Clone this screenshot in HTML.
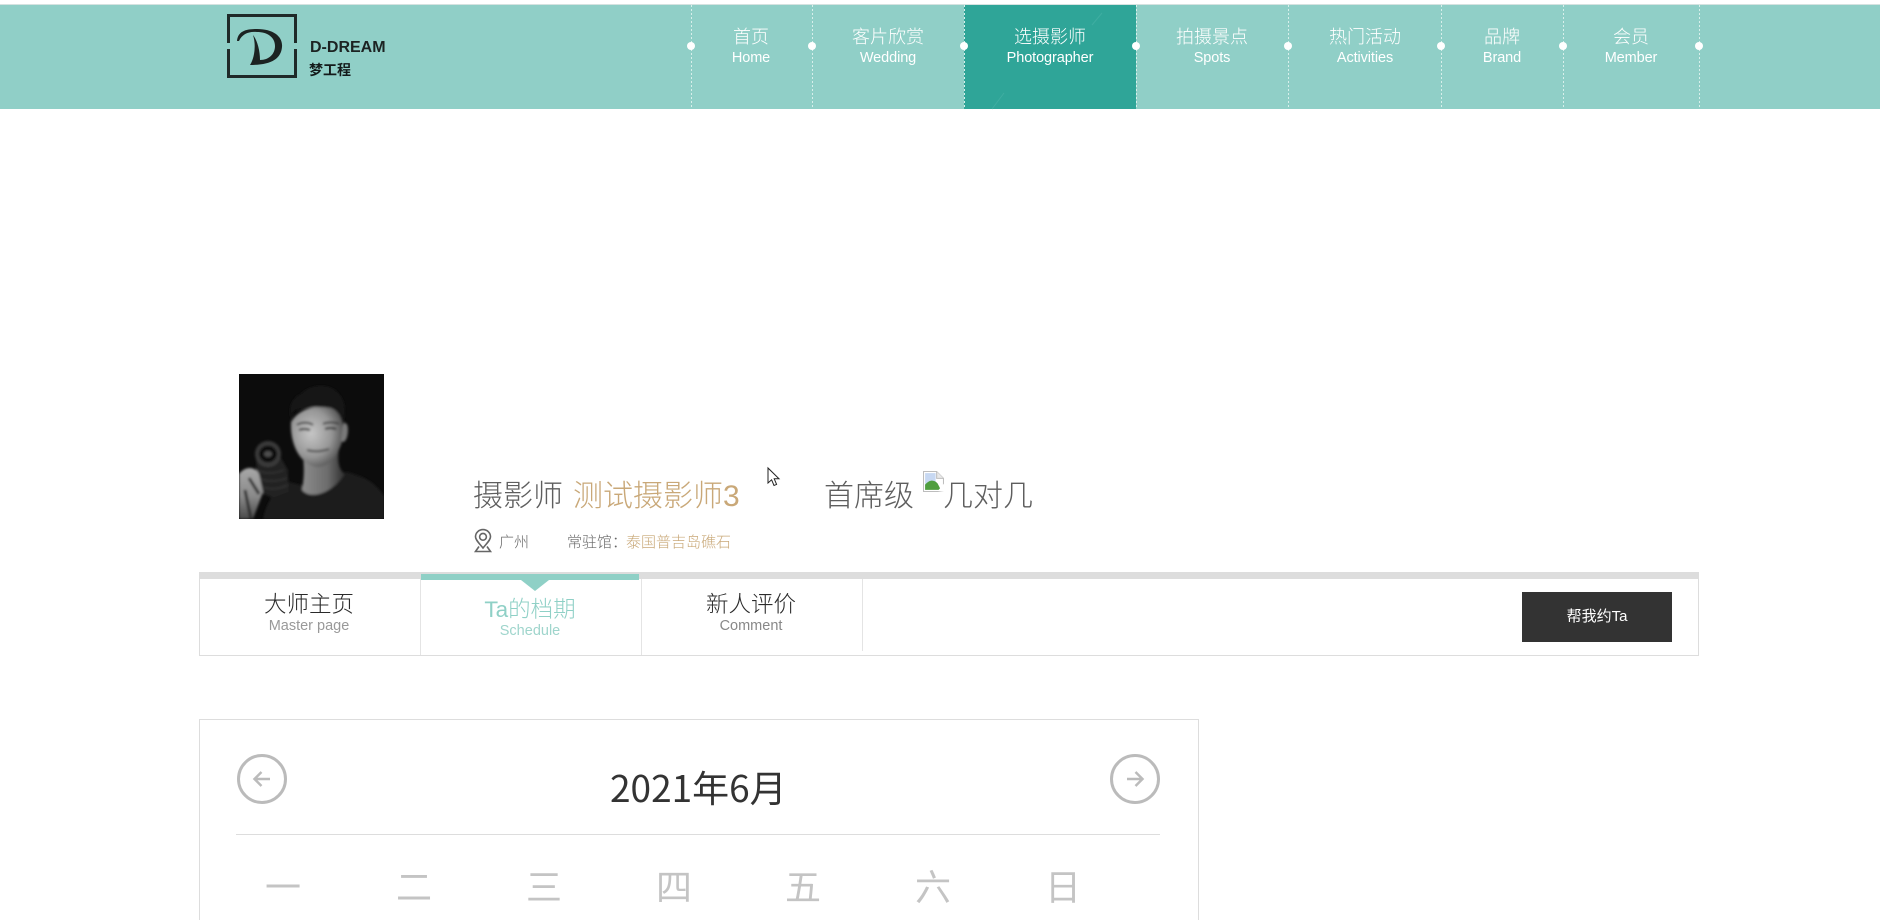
<!DOCTYPE html>
<html lang="zh"><head><meta charset="utf-8"><title>摄影师</title>
<style>
html,body{margin:0;padding:0;background:#fff;width:1880px;height:920px;overflow:hidden}
body{position:relative;font-family:"Liberation Sans","Noto Sans CJK SC",sans-serif}
.a{position:absolute;white-space:nowrap}
.c{position:absolute;white-space:nowrap;transform:translateX(-50%);text-align:center}
.cn{font-family:"Noto Sans CJK SC",sans-serif}
.nav{position:absolute;left:0;top:5px;width:1880px;height:104px;background:#90cfc7}
.on{position:absolute;left:964px;top:5px;width:172px;height:104px;background:#2fa598}
.sep{position:absolute;top:5px;height:104px;width:1px;background:repeating-linear-gradient(to bottom,#d8efeb 0,#d8efeb 2px,transparent 2px,transparent 4px)}
.dot{position:absolute;top:42px;width:8px;height:8px;border-radius:50%;background:#fff;margin-left:-4px}
.n1{color:#fff;font-size:18px;line-height:24px;top:25px;font-weight:300}
.n2{color:#fff;font-size:14.5px;line-height:18px;top:49px;letter-spacing:-.1px}
svg{position:absolute;overflow:visible}
.wk{font-size:36px;line-height:50px;top:863px;color:#c4c4c4;font-weight:400}
.h{font-size:30px;line-height:42px;top:476px;font-weight:300;color:#5e5e5e}
</style></head><body>
<div class="a" style="left:0;top:4px;width:1880px;height:1px;background:#d5e2e0"></div>
<div class="nav"></div><div class="on"></div>
<svg style="left:964px;top:5px" width="172" height="104" viewBox="0 0 172 104"><path d="M128 20L138 8M28 104L40 88" stroke="#3fada1" stroke-width="1"/></svg>

<svg style="left:227px;top:14px" width="70" height="64" viewBox="0 0 70 64">
<path d="M1.500 29V1.500H68.500V29M68.500 35V62.500H1.500V35" fill="none" stroke="#1f2a29" stroke-width="3"/>
<path d="M10 27C11 17 19 15 30 15C47 15 56 23 55 33C54 45 44 51 23 51C28 43 29 30 26 21C30 26 33 36 33 46C42 46 48 40 48 32C48 23 40 18 30 18C22 17 15 20 12 27Z" fill="#1c2322"/>
</svg>
<div class="a" style="left:310px;top:38px;font-size:16px;line-height:20px;font-weight:bold;color:#1c2322">D-DREAM</div>
<div class="a cn" style="left:309px;top:60px;font-size:14px;line-height:20px;font-weight:bold;color:#141a1a">梦工程</div>

<div class="sep" style="left:691px"></div><div class="sep" style="left:812px"></div><div class="sep" style="left:964px"></div><div class="sep" style="left:1136px"></div><div class="sep" style="left:1288px"></div><div class="sep" style="left:1441px"></div><div class="sep" style="left:1563px"></div><div class="sep" style="left:1699px"></div>
<div class="dot" style="left:691px"></div><div class="dot" style="left:812px"></div><div class="dot" style="left:964px"></div><div class="dot" style="left:1136px"></div><div class="dot" style="left:1288px"></div><div class="dot" style="left:1441px"></div><div class="dot" style="left:1563px"></div><div class="dot" style="left:1699px"></div>

<div class="c n1" style="left:751px">首页</div><div class="c n2" style="left:751px">Home</div>
<div class="c n1" style="left:888px">客片欣赏</div><div class="c n2" style="left:888px">Wedding</div>
<div class="c n1" style="left:1050px">选摄影师</div><div class="c n2" style="left:1050px">Photographer</div>
<div class="c n1" style="left:1212px">拍摄景点</div><div class="c n2" style="left:1212px">Spots</div>
<div class="c n1" style="left:1365px">热门活动</div><div class="c n2" style="left:1365px">Activities</div>
<div class="c n1" style="left:1502px">品牌</div><div class="c n2" style="left:1502px">Brand</div>
<div class="c n1" style="left:1631px">会员</div><div class="c n2" style="left:1631px">Member</div>

<svg style="left:239px;top:374px;overflow:hidden" width="145" height="145" viewBox="0 0 145 145">
<defs><filter id="b1"><feGaussianBlur stdDeviation="1.200"/></filter>
<radialGradient id="f" cx="0.38" cy="0.45" r="0.7"><stop offset="0" stop-color="#c6c6c6"/><stop offset="0.55" stop-color="#969696"/><stop offset="1" stop-color="#3c3c3c"/></radialGradient>
<linearGradient id="nk" x1="0" x2="1"><stop offset="0" stop-color="#8c8c8c"/><stop offset="0.6" stop-color="#6c6c6c"/><stop offset="1" stop-color="#2c2c2c"/></linearGradient>
<linearGradient id="hd" x1="0" x2="0" y1="0" y2="1"><stop offset="0" stop-color="#a8a8a8"/><stop offset="0.55" stop-color="#8a8a8a"/><stop offset="1" stop-color="#4a4a4a"/></linearGradient></defs>
<rect width="145" height="145" fill="#0c0c0c"/>
<g filter="url(#b1)">
<path d="M50 108C28 118 24 145 24 145H145V122C135 106 122 102 108 98L66 112Z" fill="#1a1a1a"/>
<path d="M64 82C66 100 64 110 63 116C72 126 92 120 106 100C100 96 98 88 100 74Z" fill="url(#nk)"/>
<path d="M52 48C51 72 62 91 78 93C93 93 102 76 105 60L105 36C96 30 64 28 52 48Z" fill="url(#f)"/>
<path d="M104 50C109 46 110 56 108 63C106 70 102 68 102 66Z" fill="#7a7a7a"/>
<path d="M52 46C48 30 56 22 62 20C70 10 92 8 100 20C108 28 106 42 104 52C102 42 99 37 92 34C80 32 66 33 56 36C53 39 52 42 52 46Z" fill="#191919"/>
<path d="M58 51C62 48 70 48 74 51M84 50C88 48 96 48 100 50" stroke="#404040" stroke-width="2" fill="none"/>
<path d="M60 56Q65 54 71 56M86 55Q91 53 97 55" stroke="#262626" stroke-width="2" fill="none"/>
<path d="M68 76Q78 79 90 75" stroke="#4c4c4c" stroke-width="2" fill="none"/>
<path d="M17 84L18 104L20 118L34 124L50 118L49 96L42 84Z" fill="#202020"/>
<path d="M17 96Q30 102 45 96M18 104Q32 110 48 104M20 112Q34 118 49 111" stroke="#303030" stroke-width="2" fill="none"/>
<ellipse cx="29" cy="80" rx="13" ry="13" fill="#3a3a3a"/>
<ellipse cx="29" cy="80" rx="9" ry="8.500" fill="#111"/>
<ellipse cx="29" cy="80" rx="4" ry="3" fill="#4e4e4e"/>
<path d="M0 100C6 92 16 92 20 100L24 118L14 145H0Z" fill="url(#hd)"/>
<path d="M10 104L20 120M6 116L12 145" stroke="#2c2c2c" stroke-width="3"/>
</g></svg>

<div class="a h" style="left:473px">摄影师</div>
<div class="a h" style="left:573px;color:#c9a878">测试摄影师3</div>
<div class="a h" style="left:824px">首席级</div>
<svg style="left:923px;top:471px" width="21" height="21" viewBox="0 0 20 20">
<path d="M.5.5H13L19.500 7V19.500H.5Z" fill="#fff" stroke="#bdbdbd"/><path d="M13 .5V7H19.500" fill="#e8e8e8" stroke="#bdbdbd"/>
<rect x="2" y="2" width="10" height="12" fill="#c7d8f2"/><path d="M2 18V13C6 8 11 8 14 12L17 18Z" fill="#4f9e3f"/><path d="M14 19L20 12V20Z" fill="#fff"/></svg>
<div class="a h" style="left:943px">几对几</div>
<svg style="left:767px;top:467px" width="13" height="20" viewBox="0 0 13 20"><path d="M1 1V16L4.600 12.800L7 18.500L9.600 17.400L7.200 11.800H12Z" fill="#fff" stroke="#222" stroke-width="1"/></svg>

<svg style="left:474px;top:529px" width="18" height="24" viewBox="0 0 18 24" fill="none" stroke="#666" stroke-width="1.600">
<path d="M9 19C5 14 1.500 11 1.500 7.800A7.500 7.200 0 0 1 16.500 7.800C16.500 11 13 14 9 19Z"/><circle cx="9" cy="7.800" r="3.400"/><path d="M5 17.500L1.500 22.500H16.500L13 17.500"/></svg>
<div class="a" style="left:499px;top:532px;font-size:15px;line-height:22px;color:#666;font-weight:300">广州</div>
<div class="a" style="left:567px;top:532px;font-size:15px;line-height:22px;color:#666;font-weight:300">常驻馆：</div>
<div class="a" style="left:626px;top:532px;font-size:15px;line-height:22px;color:#c9a878;font-weight:300">泰国普吉岛礁石</div>

<div class="a" style="left:199px;top:572px;width:1500px;height:84px;box-sizing:border-box;border:1px solid #ddd;border-top:7px solid #ddd"></div>
<div class="a" style="left:420px;top:579px;width:1px;height:76px;background:#e4e4e4"></div>
<div class="a" style="left:641px;top:579px;width:1px;height:76px;background:#e4e4e4"></div>
<div class="a" style="left:862px;top:579px;width:1px;height:72px;background:#e4e4e4"></div>
<div class="a" style="left:421px;top:574px;width:218px;height:6px;background:#8fd0c6"></div>
<svg style="left:521px;top:580px" width="28" height="11" viewBox="0 0 28 11"><path d="M0 0H28L14 11Z" fill="#8fd0c6"/></svg>
<div class="c" style="left:309px;top:589px;font-size:22.500px;line-height:32px;color:#2a2a2a;font-weight:300">大师主页</div>
<div class="c" style="left:309px;top:616px;font-size:14.500px;line-height:20px;color:#999">Master page</div>
<div class="c" style="left:530px;top:594px;font-size:22.500px;line-height:32px;color:#8fd0c6;font-weight:300">Ta的档期</div>
<div class="c" style="left:530px;top:621px;font-size:14.500px;line-height:20px;color:#9fd5cc">Schedule</div>
<div class="c" style="left:751px;top:589px;font-size:22.500px;line-height:32px;color:#2a2a2a;font-weight:300">新人评价</div>
<div class="c" style="left:751px;top:616px;font-size:14.500px;line-height:20px;color:#888">Comment</div>
<div class="a" style="left:1522px;top:592px;width:150px;height:50px;background:#333;color:#fff;font-size:15px;line-height:50px;text-align:center">帮我约Ta</div>

<div class="a" style="left:199px;top:719px;width:1000px;height:240px;box-sizing:border-box;border:1px solid #ddd"></div>
<svg style="left:237px;top:754px" width="50" height="50" viewBox="0 0 50 50" fill="none" stroke="#bbb"><circle cx="25" cy="25" r="23.500" stroke-width="3"/><path d="M33 25H18M24.500 18L17.500 25L24.500 32" stroke-width="2.500"/></svg>
<svg style="left:1110px;top:754px" width="50" height="50" viewBox="0 0 50 50" fill="none" stroke="#bbb"><circle cx="25" cy="25" r="23.500" stroke-width="3"/><path d="M17 25H32M25.500 18L32.500 25L25.500 32" stroke-width="2.500"/></svg>
<div class="a" style="left:610px;top:760px;font-size:37px;line-height:52px;color:#333;font-family:'Noto Sans CJK SC',sans-serif">2021年6月</div>
<div class="a" style="left:236px;top:834px;width:924px;height:1px;background:#ddd"></div>
<div class="c wk" style="left:283px">一</div><div class="c wk" style="left:414px">二</div><div class="c wk" style="left:544px">三</div><div class="c wk" style="left:674px">四</div><div class="c wk" style="left:803px">五</div><div class="c wk" style="left:933px">六</div><div class="c wk" style="left:1063px">日</div>
</body></html>
